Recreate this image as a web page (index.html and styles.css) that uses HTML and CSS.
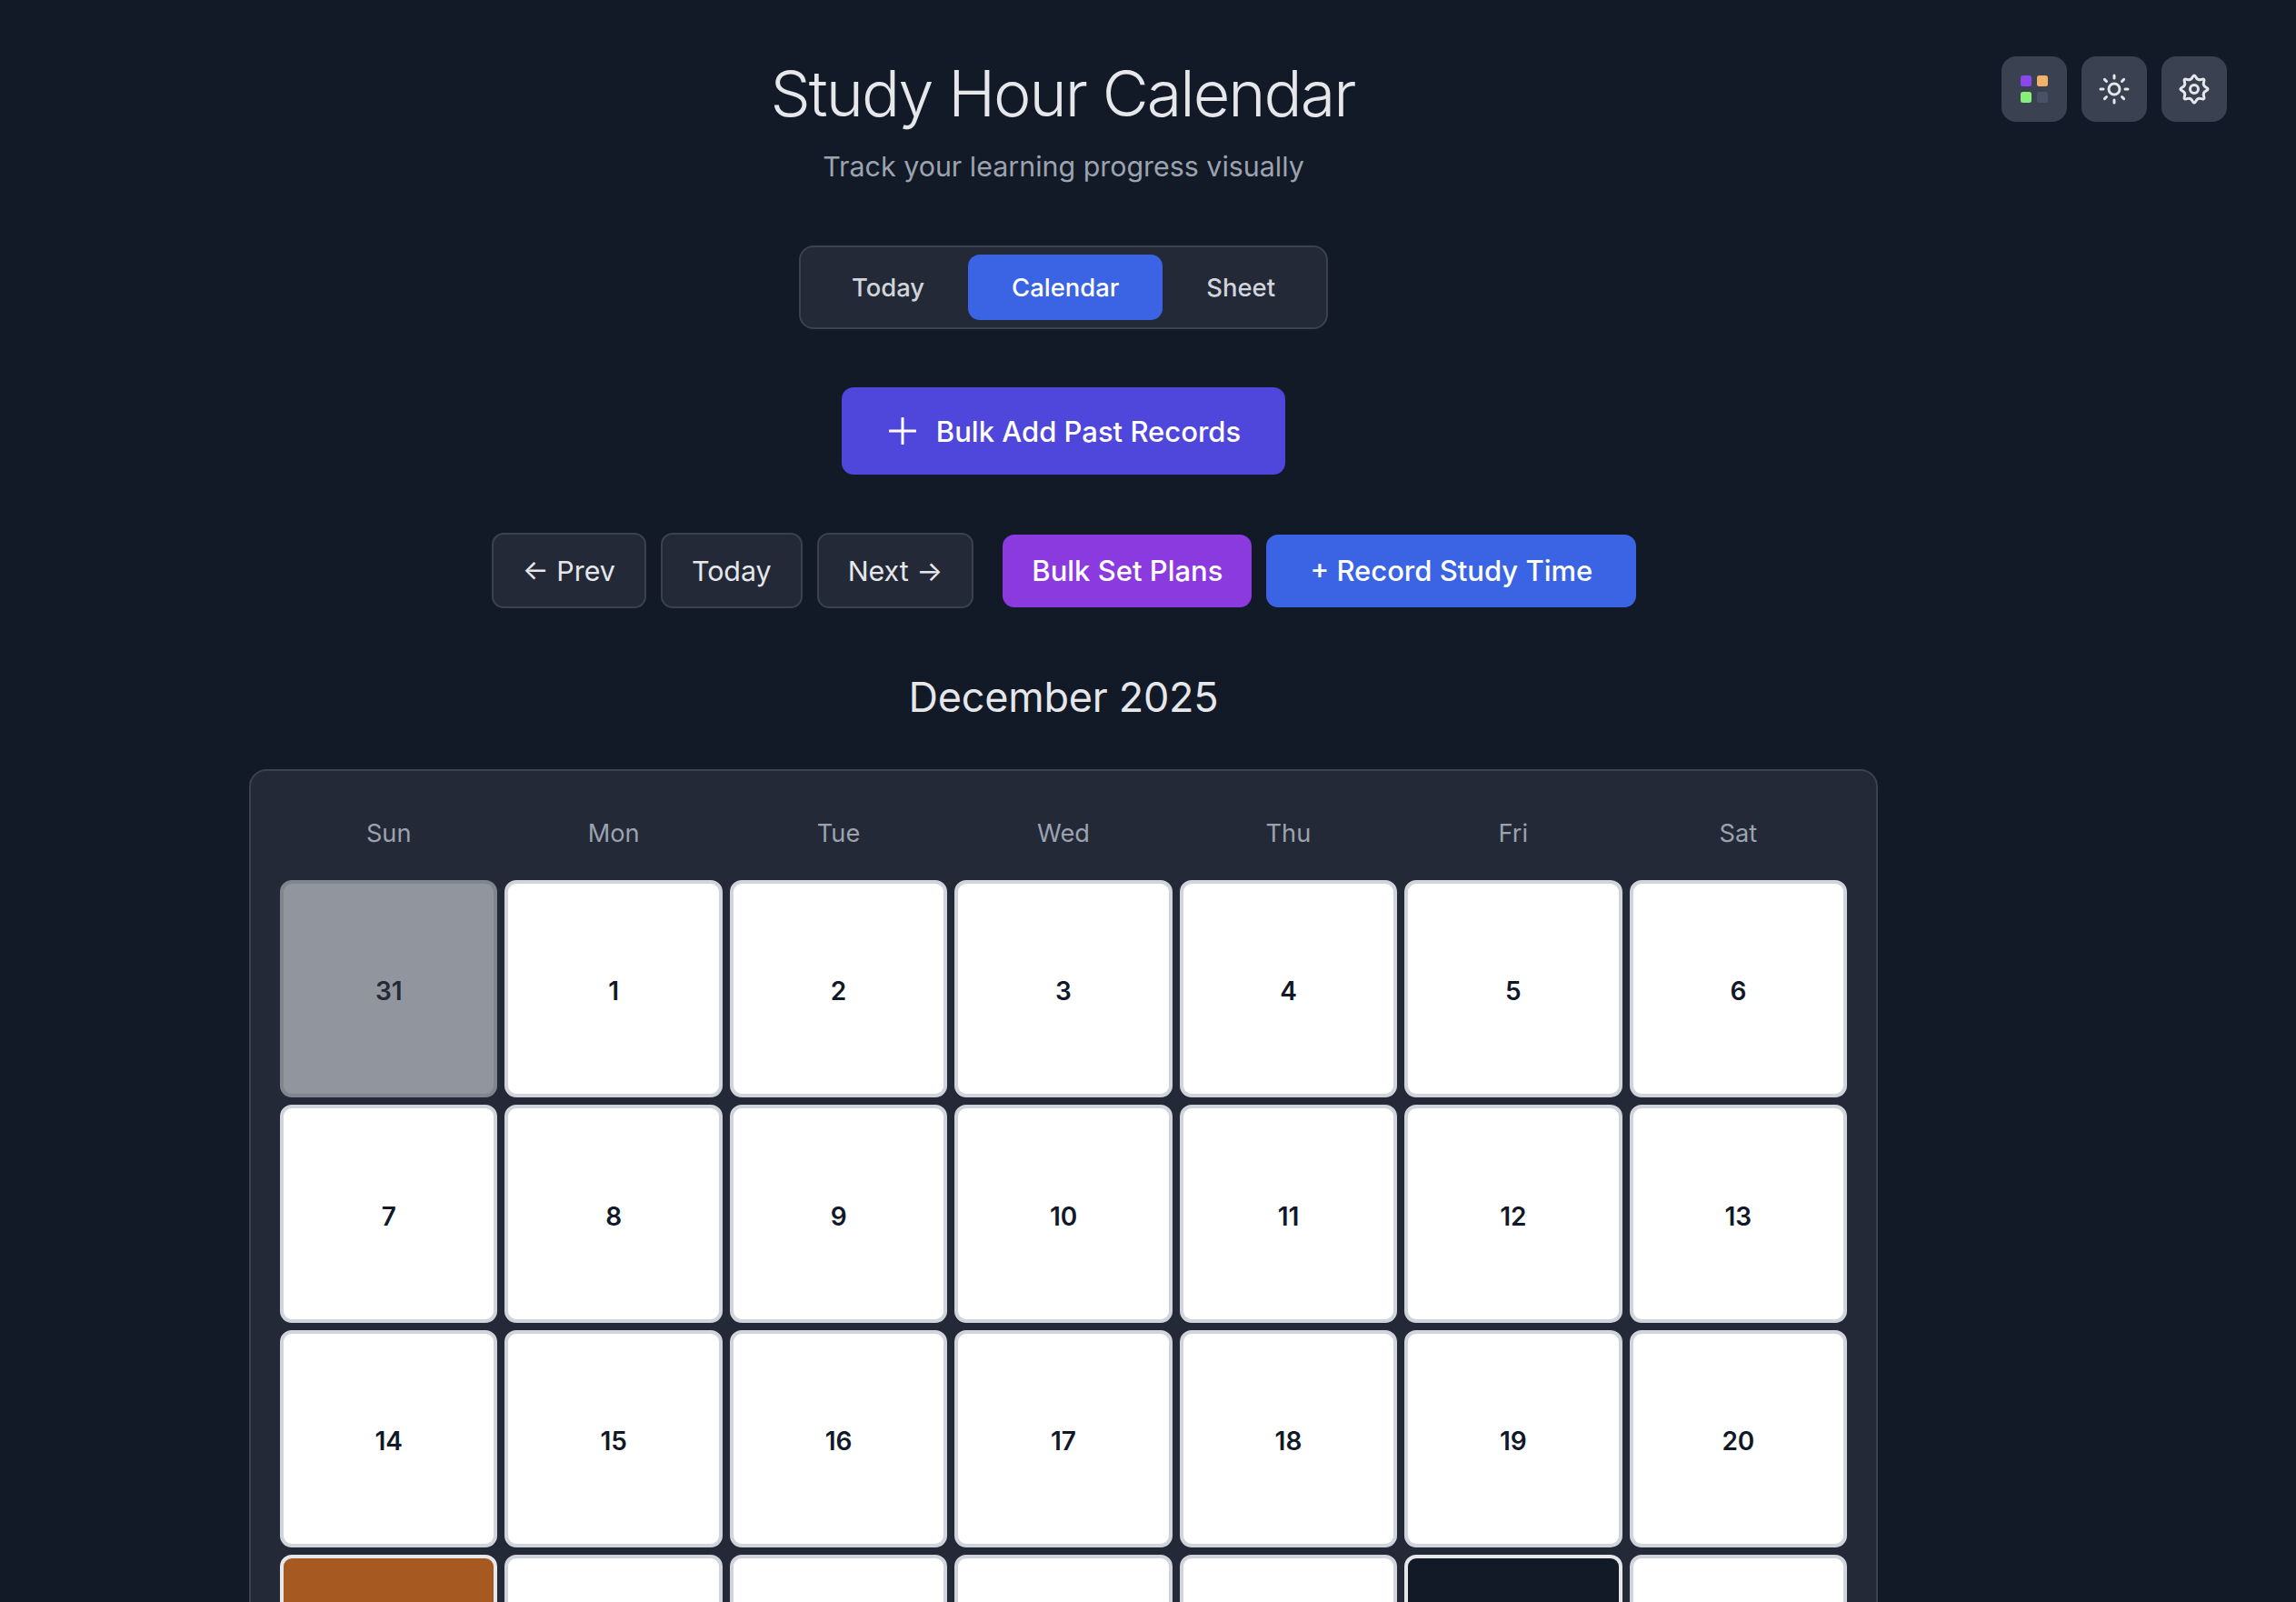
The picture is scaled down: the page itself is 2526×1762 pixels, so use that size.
FILE: index.html
```html
<!DOCTYPE html>
<html lang="en">
<head>
    <meta charset="UTF-8">
    <title>Study Hour Calendar</title>
    <link rel="stylesheet" href="styles.css">
</head>
<body>
    <div class="top-actions">
        <button class="icon-btn" aria-label="Theme colors">
            <span class="swatches">
                <span class="swatch purple"></span>
                <span class="swatch orange"></span>
                <span class="swatch green"></span>
                <span class="swatch slate"></span>
            </span>
        </button>
        <button class="icon-btn" aria-label="Toggle theme">
            <svg class="icon" viewBox="0 0 24 24"><circle cx="12" cy="12" r="4"/><path d="M12 2v2M12 20v2M4.93 4.93l1.41 1.41M17.66 17.66l1.41 1.41M2 12h2M20 12h2M6.34 17.66l-1.41 1.41M19.07 4.93l-1.41 1.41"/></svg>
        </button>
        <button class="icon-btn" aria-label="Settings">
            <svg class="icon" viewBox="0 0 24 24"><path d="M20.75 10.74Q23.4 12 20.75 13.26T19.08 17.29T17.29 19.08T13.26 20.75T10.74 20.75T6.71 19.08T4.92 17.29T3.25 13.26T3.25 10.74T4.92 6.71T6.71 4.92T10.74 3.25T13.26 3.25T17.29 4.92T19.08 6.71T20.75 10.74Z"/><circle cx="12" cy="12" r="3"/></svg>
        </button>
    </div>

    <main class="container">
        <h1>Study Hour Calendar</h1>
        <p class="subtitle">Track your learning progress visually</p>

        <div class="tabs">
            <button class="tab">Today</button>
            <button class="tab active">Calendar</button>
            <button class="tab">Sheet</button>
        </div>

        <button class="bulk-add">
            <svg class="plus" viewBox="0 0 30 30"><path d="M15 1v28M1 15h28"/></svg>
            Bulk Add Past Records
        </button>

        <div class="nav-row">
            <button class="btn nav-btn">← Prev</button>
            <button class="btn nav-btn">Today</button>
            <button class="btn nav-btn next">Next →</button>
            <button class="btn bulk-plans">Bulk Set Plans</button>
            <button class="btn record">+ Record Study Time</button>
        </div>

        <h2>December 2025</h2>

        <section class="calendar">
            <div class="day-names">
                <div>Sun</div><div>Mon</div><div>Tue</div><div>Wed</div><div>Thu</div><div>Fri</div><div>Sat</div>
            </div>
            <div class="days">
                <div class="day outside">31</div>
                <div class="day">1</div>
                <div class="day">2</div>
                <div class="day">3</div>
                <div class="day">4</div>
                <div class="day">5</div>
                <div class="day">6</div>
                <div class="day">7</div>
                <div class="day">8</div>
                <div class="day">9</div>
                <div class="day">10</div>
                <div class="day">11</div>
                <div class="day">12</div>
                <div class="day">13</div>
                <div class="day">14</div>
                <div class="day">15</div>
                <div class="day">16</div>
                <div class="day">17</div>
                <div class="day">18</div>
                <div class="day">19</div>
                <div class="day">20</div>
                <div class="day studied"></div>
                <div class="day"></div>
                <div class="day"></div>
                <div class="day"></div>
                <div class="day"></div>
                <div class="day today"></div>
                <div class="day"></div>
            </div>
        </section>
    </main>
</body>
</html>
```
FILE: styles.css
```css
html, body {
    height: 100%;
    overflow: hidden;
}
body {
    margin: 0;
    padding-right: 186px;
    background-color: #121927;
    color: #e5e7eb;
    font-family: Inter, "Noto Sans", sans-serif;
}
button {
    font-family: inherit;
    border: none;
    cursor: pointer;
}
.top-actions {
    position: absolute;
    top: 62px;
    right: 76px;
    display: flex;
    gap: 16px;
}
.icon-btn {
    display: flex;
    align-items: center;
    justify-content: center;
    width: 72px;
    height: 72px;
    padding: 0;
    background-color: #3a4150;
    border-radius: 16px;
}
.icon {
    width: 36px;
    height: 36px;
    fill: none;
    stroke: #e5e7eb;
    stroke-width: 2;
    stroke-linecap: round;
    stroke-linejoin: round;
}
.swatches {
    display: grid;
    grid-template-columns: 12px 12px;
    grid-auto-rows: 12px;
    gap: 6px;
}
.swatch {
    border-radius: 2.5px;
}
.purple { background-color: #8b46ee; }
.orange { background-color: #f2b369; }
.green { background-color: #86ef7a; }
.slate { background-color: #465268; }

.container {
    display: flex;
    flex-direction: column;
    align-items: center;
    padding-top: 71px;
}
h1 {
    margin: 0 2px 0 0;
    font-size: 70px;
    line-height: 64px;
    font-weight: 300;
    letter-spacing: -1.95px;
    color: #e5e7eb;
}
.subtitle {
    margin: 26px 0 0;
    font-size: 30.4px;
    line-height: 45px;
    color: #9ca3af;
}
.tabs {
    display: flex;
    margin-top: 64px;
    padding: 8px;
    background-color: #232937;
    border: 2px solid #3a4150;
    border-radius: 16px;
}
.tab {
    height: 72px;
    padding: 0 48px;
    background: none;
    color: #d1d5db;
    font-size: 27.4px;
    font-weight: 500;
    border-radius: 13px;
}
.tab.active {
    background-color: #3a64e4;
    color: #fff;
}
.bulk-add {
    display: flex;
    align-items: center;
    gap: 22px;
    height: 96px;
    margin-top: 64px;
    padding: 0 49px 0 52px;
    background-color: #4f46dc;
    color: #fff;
    font-size: 31px;
    font-weight: 500;
    border-radius: 13px;
}
.plus {
    width: 30px;
    height: 30px;
    fill: none;
    stroke: #fff;
    stroke-width: 3;
    stroke-linecap: round;
}
.nav-row {
    display: flex;
    align-items: center;
    gap: 16px;
    margin: 64px 0 0 1px;
}
.btn {
    font-size: 31px;
    border-radius: 13px;
    height: 80px;
    color: #fff;
    font-weight: 500;
}
.nav-btn {
    height: 83px;
    padding: 0 32px;
    background-color: #232937;
    border: 2px solid #3a4150;
    color: #e5e7eb;
    font-size: 30.4px;
    font-weight: 400;
}
.next {
    margin-right: 16px;
}
.bulk-plans {
    padding: 0 32px;
    background-color: #8a3adf;
}
.record {
    padding: 0 48px;
    background-color: #3a64e4;
}
h2 {
    margin: 69px 0 0;
    font-size: 45px;
    line-height: 58px;
    font-weight: 400;
    letter-spacing: -0.25px;
    color: #e5e7eb;
}
.calendar {
    box-sizing: border-box;
    width: 1792px;
    margin-top: 50px;
    padding: 32px;
    background-color: #232937;
    border: 2px solid #3a4150;
    border-radius: 19px;
}
.day-names {
    display: grid;
    grid-template-columns: repeat(7, 1fr);
    gap: 8px;
    height: 74px;
    margin-bottom: 14px;
    font-size: 27.2px;
    font-weight: 400;
    line-height: 74px;
    text-align: center;
    color: #9ca3af;
}
.days {
    display: grid;
    grid-template-columns: repeat(7, 1fr);
    gap: 8px;
}
.day {
    box-sizing: border-box;
    display: flex;
    align-items: center;
    justify-content: center;
    aspect-ratio: 1;
    padding-top: 5px;
    background-color: #fff;
    border: 4px solid #d1d5db;
    border-radius: 13px;
    font-size: 28px;
    font-weight: 600;
    color: #111827;
}
.day.outside {
    background-color: #91959d;
    border-color: #81858d;
    color: #232937;
}
.day.studied {
    background-color: #a65a22;
    border-color: #e5e7eb;
}
.day.today {
    background-color: #131a27;
    border-color: #e5e7eb;
}
```
